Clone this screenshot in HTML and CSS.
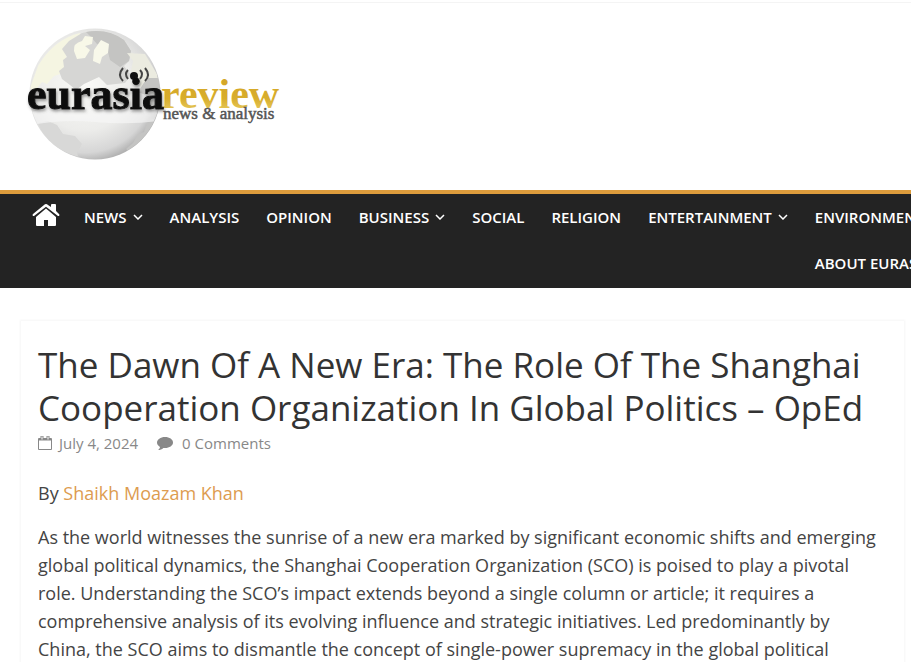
FILE: index.html
```html
<!DOCTYPE html>
<html lang="en">
<head>
<meta charset="utf-8">
<title>The Dawn Of A New Era – Eurasia Review</title>
<link rel="stylesheet" href="styles.css">
</head>
<body>
<header class="site-header">
  <a class="logo" href="#" aria-label="Eurasia Review">
    <svg width="262" height="142" viewBox="20 22 262 142">
      <defs>
        <radialGradient id="globe" cx="42%" cy="42%" r="60%">
          <stop offset="0" stop-color="#fafaf7"/>
          <stop offset=".6" stop-color="#ececea"/>
          <stop offset=".88" stop-color="#d6d6d6"/>
          <stop offset="1" stop-color="#b2b2b2"/>
        </radialGradient>
        <linearGradient id="gold" x1="0" y1="0" x2="0" y2="1">
          <stop offset="0" stop-color="#d2a325"/>
          <stop offset=".6" stop-color="#d8ad2c"/>
          <stop offset="1" stop-color="#edd675"/>
        </linearGradient>
        <filter id="soft" x="-10%" y="-10%" width="120%" height="120%"><feGaussianBlur stdDeviation=".7"/></filter>
        <filter id="shade" x="-10%" y="-30%" width="120%" height="180%"><feDropShadow dx="1" dy="2" stdDeviation="1.5" flood-color="#555" flood-opacity=".6"/></filter>
        <clipPath id="disc"><circle cx="95" cy="94" r="65"/></clipPath>
      </defs>
      <circle cx="95" cy="94" r="65.500" fill="url(#globe)" filter="url(#soft)"/>
      <g clip-path="url(#disc)" filter="url(#soft)">
        <path d="M38 66Q54 39 80 33l2 5-8 5 1 8-9 5 4 9-7 8-9 3-7 8-5-2-8 10-4-4Z" fill="#f5f5e2"/>
        <path d="M82 33Q104 27 124 40l7 11-2 10-5 5 7 9-6 8-18 2-8-8-15 7-8 6-6-5-8-6-3-8 5-4-1-7 4-3-5-8 7-8Z" fill="#d6d6d4"/>
        <path d="M86 32q22-4 38 8l7 11-2 10-9 6-10-7-3-12-10-4-6-7Z" fill="#c4c4c2"/>
        <path d="M74 51q-1-8 8-10l3-5 8 1-1 7-7 2 5 4-5 8-8 1Z" fill="#f8f8e8"/>
        <path d="m94 50 7-10 8 4-1 9-6 4-2 7-7-3Z" fill="#f8f8ea"/>
        <path d="m127 53 6 8-2 10 7 6 4 16h18l-3-19-12-20Z" fill="#ebebe0"/>
        <path d="m138 92 8 3 6 14 8-5V78h-13Z" fill="#c4c4c2"/>
        <path d="m38 123 10-2 9 4 6 9 12 2 7 8-5 9 3 8-22-9-15-18Z" fill="#d8d8d7"/>
        <path d="m126 149 7-6 5-9 6-2 5-15 6 3-9 22-14 12Z" fill="#c4c4c3"/>
        <path d="M31 112q32-8 64-5t64-2v16q-32 4-64 1t-63 3Z" fill="#f8f8f7" opacity=".65"/>
      </g>
      <g fill="none" stroke="#444" stroke-width="2">
        <path d="M128 70q-4 4 0 9M123 68q-6 7 0 13M140 70q4 4 0 9M145 68q6 7 0 13"/>
      </g>
      <circle cx="134" cy="76" r="4" fill="#111"/>
      <g font-family="Liberation Serif, serif">
        <text x="161" y="108" font-size="42" font-weight="700" fill="url(#gold)">review</text>
        <text x="27" y="109" font-size="44" font-weight="700" fill="#111" stroke="#111" filter="url(#shade)">eurasia</text>
        <text x="163" y="119" font-size="17" fill="#555" stroke="#555" stroke-width=".5">news &amp; analysis</text>
      </g>
    </svg>
  </a>
</header>
<nav class="main-nav" aria-label="Main">
  <a class="home" href="#" aria-label="Home">
    <svg width="28" height="24" viewBox="0 0 28 24" fill="#fff"><path d="M14 5.500 4 14v8q0 1 1 1h7v-6h4v6h7q1 0 1-1v-8Z"/><path d="m27 11-3-3V2q0-1-1-1h-3q-1 0-1 1v2l-3-2q-2-2-4 0L1 11q-1 1 0 2h1L14 3.800 26 13h1q1-1 0-2Z"/></svg>
  </a>
  <a href="#">NEWS <svg class="chev" viewBox="0 0 10 6"><path d="m1 1 4 4 4-4"/></svg></a>
  <a href="#">ANALYSIS</a>
  <a href="#">OPINION</a>
  <a href="#">BUSINESS <svg class="chev" viewBox="0 0 10 6"><path d="m1 1 4 4 4-4"/></svg></a>
  <a href="#">SOCIAL</a>
  <a href="#">RELIGION</a>
  <a href="#">ENTERTAINMENT <svg class="chev" viewBox="0 0 10 6"><path d="m1 1 4 4 4-4"/></svg></a>
  <a href="#">ENVIRONMENT</a>
  <a class="about" href="#">ABOUT EURASIA REVIEW</a>
</nav>
<main class="article">
  <h1>The Dawn Of A New Era: The Role Of The Shanghai Cooperation Organization In Global Politics – OpEd</h1>
  <div class="meta">
    <svg width="14" height="16" viewBox="0 0 14 16" fill="none" stroke="#888"><path d="M.5 3.500h13v11H.500Z"/><path d="M1 4.500h12" stroke-width="2"/><path d="M4 1v4M10 1v4" stroke-width="3"/><path d="M4 1.500v3M10 1.500v3" stroke="#fff"/></svg>
    <a href="#">July 4, 2024</a>
    <svg class="bubble" width="16" height="15" viewBox="0 0 16 15" fill="#888"><path d="M8 1C3.500 1 0 3.500 0 6.500c0 2 1.300 3.500 3 4.400-.2 1.400-1 2.300-2 3.100 2 0 4-.8 5.300-2.100L8 12c4.500 0 8-2.400 8-5.500S12.500 1 8 1Z"/></svg>
    <a href="#">0 Comments</a>
  </div>
  <p>By <a class="author" href="#">Shaikh Moazam Khan</a></p>
  <p>As the world witnesses the sunrise of a new era marked by significant economic shifts and emerging global political dynamics, the Shanghai Cooperation Organization (SCO) is poised to play a pivotal role. Understanding the SCO’s impact extends beyond a single column or article; it requires a comprehensive analysis of its evolving influence and strategic initiatives. Led predominantly by China, the SCO aims to dismantle the concept of single-power supremacy in the global political</p>
</main>
</body>
</html>
```
FILE: styles.css
```css
* { box-sizing: border-box; }
body {
  margin: 0;
  overflow: hidden;
  background: #fff;
  color: #444;
  font-family: "Open Sans", sans-serif;
  font-size: 18px;
  line-height: 28px;
}
a { color: inherit; text-decoration: none; }
.site-header {
  margin-top: 2px;
  padding: 19px 20px 26px;
  border-top: 1px solid #f4f4f4;
}
.logo, .logo svg { display: block; }
.logo { width: max-content; }
.main-nav {
  display: grid;
  grid-template-columns: repeat(9, max-content);
  grid-auto-rows: 46px;
  column-gap: 1px;
  height: 98px;
  padding-left: 20px;
  border-top: 4px solid #dd9c3c;
  background: #232323;
  color: #fff;
  font-size: 15px;
  font-weight: 600;
}
.main-nav a {
  display: flex;
  align-items: center;
  gap: 6px;
  padding: 0 13px;
  white-space: nowrap;
}
.main-nav .home { padding: 0 10px 0 12px; }
.main-nav .home svg { margin-bottom: 4px; }
.main-nav .about { grid-column: 9; }
.chev {
  width: 10px;
  height: 6px;
  fill: none;
  stroke: #fff;
  stroke-width: 1.5;
}
.article {
  margin: 33px 7px 0 21px;
  padding: 22px 23px 22px 17px;
  box-shadow: 0 0 2px 1px rgba(0, 0, 0, .04);
}
h1 {
  margin: 0;
  color: #333;
  font-size: 35px;
  font-weight: 400;
  line-height: 43px;
}
.meta {
  display: flex;
  align-items: center;
  gap: 7px;
  margin-bottom: 22px;
  color: #888;
  font-size: 15px;
}
.bubble { margin: 0 2px 0 12px; }
p { margin: 0 0 16px; }
.author { color: #dd9c50; }
```
